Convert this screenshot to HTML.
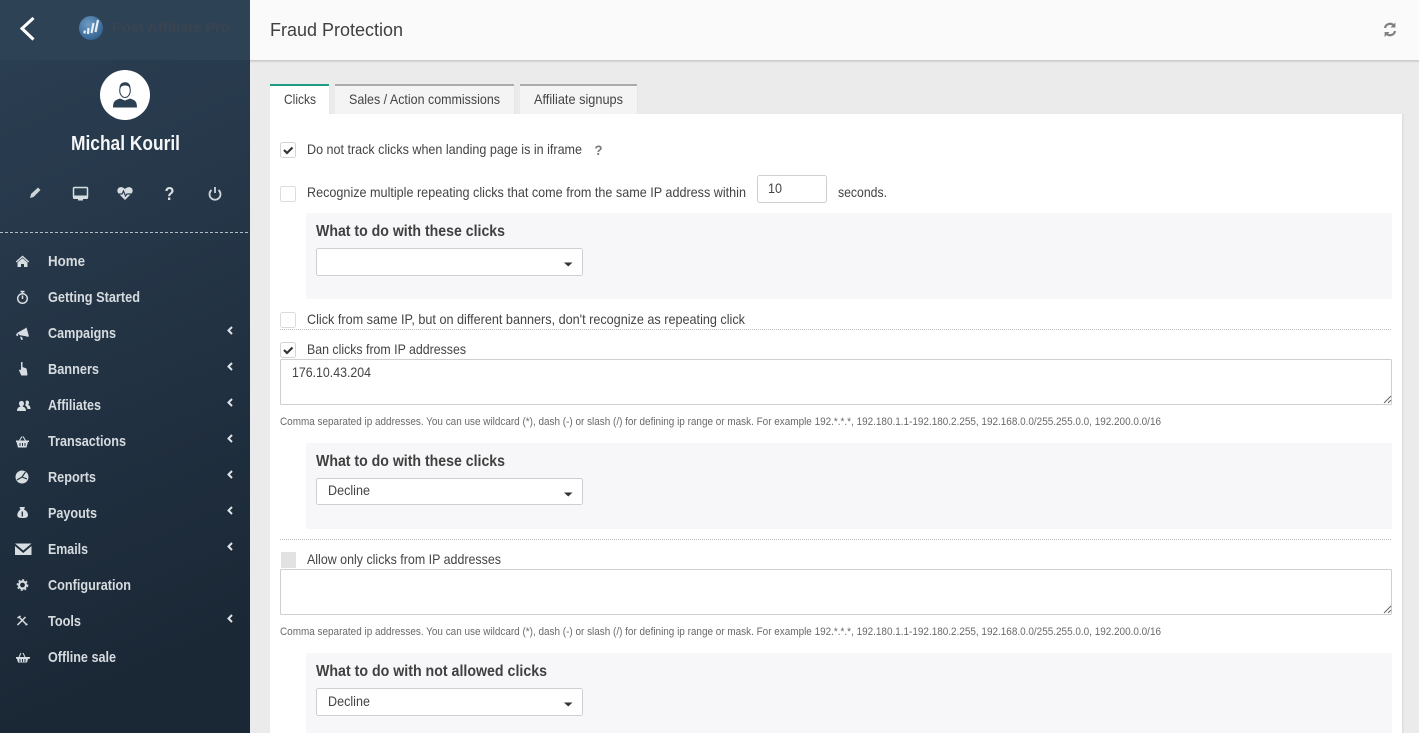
<!DOCTYPE html>
<html><head><meta charset="utf-8"><title>Fraud Protection</title>
<style>
html,body{margin:0;padding:0;width:1419px;height:733px;overflow:hidden;background:#ebebeb}
svg{display:block;position:absolute;left:0;top:0}
text{font-family:"Liberation Sans",sans-serif}
.m{font-size:15px;font-weight:bold;fill:#d6dbdf}
.t{font-size:14px;fill:#444}
.h{font-size:16px;font-weight:bold;fill:#404040}
.s{font-size:10.8px;fill:#6a6a6a}
.ic{fill:#d8dde1}
.box{fill:#fff;stroke:#cfcfcf;stroke-width:1}
</style></head><body>
<svg width="1419" height="733" viewBox="0 0 1419 733" xmlns="http://www.w3.org/2000/svg">
<defs>
<linearGradient id="sb" x1="0" y1="0" x2="0.15" y2="1"><stop offset="0" stop-color="#2c4054"/><stop offset="1" stop-color="#1a2735"/></linearGradient>
<linearGradient id="hs" x1="0" y1="0" x2="0" y2="1"><stop offset="0" stop-color="#c4c4c4"/><stop offset="1" stop-color="#ebebeb"/></linearGradient>
<radialGradient id="lg" cx="0.4" cy="0.35" r="0.75"><stop offset="0" stop-color="#6d9cc4"/><stop offset="1" stop-color="#2d5b8c"/></radialGradient>
</defs>

<!-- main -->
<rect x="250" y="0" width="1169" height="733" fill="#ebebeb"/>
<rect x="250" y="0" width="1169" height="60" fill="#fafafa"/>
<rect x="250" y="60" width="1169" height="3" fill="url(#hs)"/>
<text x="270" y="36" font-size="18.500" fill="#404040" textLength="133" lengthAdjust="spacingAndGlyphs">Fraud Protection</text>
<g fill="none" stroke="#808080" stroke-width="2.200">
<path d="M1385 28a5 5 0 0 1 8.600-2.600"/><path d="M1395 31a5 5 0 0 1-8.600 2.600"/>
</g>
<path d="M1395.400 22.500v5h-5zM1384.600 37v-5h5z" fill="#808080"/>

<!-- tabs -->
<rect x="335" y="84" width="179" height="30" fill="#f4f4f4"/><rect x="335" y="84" width="179" height="2" fill="#ababab"/>
<rect x="520" y="84" width="117" height="30" fill="#f4f4f4"/><rect x="520" y="84" width="117" height="2" fill="#ababab"/>
<rect x="270" y="84" width="59" height="30" fill="#fff"/><rect x="270" y="84" width="59" height="2" fill="#1f9c84"/>
<rect x="329" y="86" width="1" height="28" fill="#e6e6e6"/>
<rect x="514" y="86" width="1" height="28" fill="#e6e6e6"/>
<rect x="637" y="86" width="1" height="28" fill="#e6e6e6"/>
<text class="t" x="284" y="104" textLength="32" lengthAdjust="spacingAndGlyphs">Clicks</text>
<text class="t" x="349" y="104" textLength="151" lengthAdjust="spacingAndGlyphs">Sales / Action commissions</text>
<text class="t" x="534" y="104" textLength="89" lengthAdjust="spacingAndGlyphs">Affiliate signups</text>

<!-- panel -->
<rect x="270" y="114" width="1132" height="619" fill="#fff"/>
<rect x="1402" y="114" width="1.500" height="619" fill="#dedede"/>

<!-- row 1 -->
<rect x="280.500" y="142.500" width="15" height="15" rx="2" fill="#fff" stroke="#d4d4d4"/>
<path d="M284 150l3 3 5.500-5.500" fill="none" stroke="#333" stroke-width="2.200"/>
<text class="t" x="307" y="154" textLength="275" lengthAdjust="spacingAndGlyphs">Do not track clicks when landing page is in iframe</text>
<text x="594.500" y="155" font-size="14" font-weight="bold" fill="#777" textLength="8" lengthAdjust="spacingAndGlyphs">?</text>

<!-- row 2 -->
<rect x="280.500" y="186.500" width="15" height="15" rx="2" fill="#fff" stroke="#dcdcdc"/>
<text class="t" x="307" y="197" textLength="439" lengthAdjust="spacingAndGlyphs">Recognize multiple repeating clicks that come from the same IP address within</text>
<rect class="box" x="757.500" y="175.500" width="69" height="27" rx="2"/>
<text class="t" x="768" y="193" textLength="14" lengthAdjust="spacingAndGlyphs">10</text>
<text class="t" x="838" y="197" textLength="49" lengthAdjust="spacingAndGlyphs">seconds.</text>

<rect x="306" y="213" width="1086" height="86" fill="#f7f7f9"/>
<text class="h" x="316" y="236" textLength="189" lengthAdjust="spacingAndGlyphs">What to do with these clicks</text>
<rect class="box" x="316.500" y="248.500" width="266" height="27" rx="2"/>
<path d="M564 262.500h8.500l-4.250 4z" fill="#333"/>

<!-- row 3 -->
<rect x="280.500" y="312.500" width="15" height="15" rx="2" fill="#fff" stroke="#dcdcdc"/>
<text class="t" x="307" y="324" textLength="438" lengthAdjust="spacingAndGlyphs">Click from same IP, but on different banners, don't recognize as repeating click</text>
<path d="M280 329.500H1392" stroke="#bdbdbd" stroke-dasharray="1 1"/>

<!-- row 4 -->
<rect x="280.500" y="342.500" width="15" height="15" rx="2" fill="#fff" stroke="#d4d4d4"/>
<path d="M284 350l3 3 5.500-5.500" fill="none" stroke="#333" stroke-width="2.200"/>
<text class="t" x="307" y="354" textLength="159" lengthAdjust="spacingAndGlyphs">Ban clicks from IP addresses</text>
<rect class="box" x="280.500" y="359.500" width="1111" height="45" rx="1"/>
<text class="t" x="292" y="377" textLength="79" lengthAdjust="spacingAndGlyphs">176.10.43.204</text>
<path d="M1384 403l7-7M1388 403l3-3" stroke="#666" stroke-width="1" fill="none"/>
<text class="s" x="280" y="425" textLength="881" lengthAdjust="spacingAndGlyphs">Comma separated ip addresses. You can use wildcard (*), dash (-) or slash (/) for defining ip range or mask. For example 192.*.*.*, 192.180.1.1-192.180.2.255, 192.168.0.0/255.255.0.0, 192.200.0.0/16</text>

<rect x="306" y="443" width="1086" height="86" fill="#f7f7f9"/>
<text class="h" x="316" y="466" textLength="189" lengthAdjust="spacingAndGlyphs">What to do with these clicks</text>
<rect class="box" x="316.500" y="478.500" width="266" height="26" rx="2"/>
<text class="t" x="328" y="495" textLength="42" lengthAdjust="spacingAndGlyphs">Decline</text>
<path d="M564 492.500h8.500l-4.250 4z" fill="#333"/>
<path d="M280 539.500H1392" stroke="#bdbdbd" stroke-dasharray="1 1"/>

<!-- row 5 -->
<rect x="281" y="552" width="15" height="16" rx="1" fill="#e2e2e2"/>
<text class="t" x="307" y="564" textLength="194" lengthAdjust="spacingAndGlyphs">Allow only clicks from IP addresses</text>
<rect class="box" x="280.500" y="569.500" width="1111" height="45" rx="1"/>
<path d="M1384 613l7-7M1388 613l3-3" stroke="#666" stroke-width="1" fill="none"/>
<text class="s" x="280" y="635" textLength="881" lengthAdjust="spacingAndGlyphs">Comma separated ip addresses. You can use wildcard (*), dash (-) or slash (/) for defining ip range or mask. For example 192.*.*.*, 192.180.1.1-192.180.2.255, 192.168.0.0/255.255.0.0, 192.200.0.0/16</text>

<rect x="306" y="653" width="1086" height="80" fill="#f7f7f9"/>
<text class="h" x="316" y="676" textLength="231" lengthAdjust="spacingAndGlyphs">What to do with not allowed clicks</text>
<rect class="box" x="316.500" y="688.500" width="266" height="27" rx="2"/>
<text class="t" x="328" y="706" textLength="42" lengthAdjust="spacingAndGlyphs">Decline</text>
<path d="M564 702.500h8.500l-4.250 4z" fill="#333"/>

<!-- sidebar -->
<rect x="0" y="0" width="250" height="733" fill="url(#sb)"/>
<rect x="0" y="0" width="250" height="60" fill="#2e4256"/>
<path d="M33.500 18L22 28.500 33.500 39.500" fill="none" stroke="#fff" stroke-width="3"/>
<circle cx="91" cy="28" r="12" fill="url(#lg)"/>
<path d="M84.500 33.500l.3-3M88 34l.5-6M91.500 33l2-10M95.500 32l2.500-12" stroke="#e8f0f6" stroke-width="2.200" fill="none"/>
<text x="112" y="32" font-size="14" font-weight="bold" fill="#3a4450" textLength="118" lengthAdjust="spacingAndGlyphs">Post Affiliate Pro</text>

<circle cx="125" cy="95" r="25" fill="#fff"/>
<path d="M113 107.500c0-6 2-7.500 7-9l5 2 5-2c5 1.500 7 3 7 9z" fill="#2c4054"/>
<ellipse cx="125" cy="90.500" rx="5.300" ry="7" fill="#fff" stroke="#2c4054" stroke-width="1"/>
<path d="M119.500 88c0-4 2.500-5.800 5.500-5.800s5.500 1.800 5.500 5.800c-1.500-2-4-2.500-5.500-2.500-1.700 0-4 .7-5.500 2.500z" fill="#2c4054"/>
<text x="71" y="150" font-size="20" font-weight="bold" fill="#f4f6f7" textLength="109" lengthAdjust="spacingAndGlyphs">Michal Kouril</text>

<!-- quick icons -->
<path d="M30 198l1-4 7-6.500 2.500 2.500-7 7z" fill="#cfd4d8"/>
<rect x="73.500" y="187.500" width="14" height="10" rx="1" fill="#2b3e50" stroke="#d8dde1" stroke-width="1.500"/>
<path d="M73 195.500h15V198a1 1 0 0 1-1 1H74a1 1 0 0 1-1-1zM78 199h5v1.500h-5z" fill="#d8dde1"/>
<path d="M125 200l-6.500-6.500c-1.500-2-1.500-4 0-5.500 2-1.500 4.500-1 6.500 1 2-2 4.500-2.500 6.500-1 1.500 1.500 1.500 3.500 0 5.500z" fill="#d8dde1"/>
<path d="M118 194h4l1.500-3 2 5 1.500-2h5" fill="none" stroke="#2b3e50" stroke-width="1.200"/>
<text x="164.500" y="200" font-size="18" font-weight="bold" fill="#d8dde1" textLength="10" lengthAdjust="spacingAndGlyphs">?</text>
<path d="M211.500 190a5.500 5.500 0 1 0 7 0" fill="none" stroke="#cfd4d8" stroke-width="1.800"/>
<path d="M215 187v6" stroke="#cfd4d8" stroke-width="1.800"/>

<path d="M0 232.500H250" stroke="#b4bdc5" stroke-dasharray="3 2"/>

<!-- menu text -->
<text class="m" x="48" y="266" textLength="37" lengthAdjust="spacingAndGlyphs">Home</text>
<text class="m" x="48" y="302" textLength="92" lengthAdjust="spacingAndGlyphs">Getting Started</text>
<text class="m" x="48" y="338" textLength="68" lengthAdjust="spacingAndGlyphs">Campaigns</text>
<text class="m" x="48" y="374" textLength="51" lengthAdjust="spacingAndGlyphs">Banners</text>
<text class="m" x="48" y="410" textLength="53" lengthAdjust="spacingAndGlyphs">Affiliates</text>
<text class="m" x="48" y="446" textLength="78" lengthAdjust="spacingAndGlyphs">Transactions</text>
<text class="m" x="48" y="482" textLength="48" lengthAdjust="spacingAndGlyphs">Reports</text>
<text class="m" x="48" y="518" textLength="49" lengthAdjust="spacingAndGlyphs">Payouts</text>
<text class="m" x="48" y="554" textLength="40" lengthAdjust="spacingAndGlyphs">Emails</text>
<text class="m" x="48" y="590" textLength="83" lengthAdjust="spacingAndGlyphs">Configuration</text>
<text class="m" x="48" y="626" textLength="33" lengthAdjust="spacingAndGlyphs">Tools</text>
<text class="m" x="48" y="662" textLength="68" lengthAdjust="spacingAndGlyphs">Offline sale</text>

<!-- chevrons -->
<g fill="none" stroke="#dfe4e8" stroke-width="2">
<path d="M232 327l-3.500 3.500 3.500 3.500"/>
<path d="M232 363l-3.500 3.500 3.500 3.500"/>
<path d="M232 399l-3.500 3.500 3.500 3.500"/>
<path d="M232 435l-3.500 3.500 3.500 3.500"/>
<path d="M232 471l-3.500 3.500 3.500 3.500"/>
<path d="M232 507l-3.500 3.500 3.500 3.500"/>
<path d="M232 543l-3.500 3.500 3.500 3.500"/>
<path d="M232 615l-3.500 3.500 3.500 3.500"/>
</g>

<!-- menu icons -->
<path class="ic" d="M22.500 255.500l6.700 6-.9 1-5.800-5.100-5.800 5.100-.9-1zM17.500 262.500l5-4.200 5 4.200v4.500h-3.500v-3h-3v3h-3.500z"/>
<g fill="none" stroke="#d8dde1" stroke-width="1.500"><circle cx="22.500" cy="298.500" r="4.800"/><path d="M22.500 295.500v3.500M20.500 291.500h4M22.500 291.500v2"/></g>
<path class="ic" d="M17 333l8-4.500 1.500-1 2.500 9-2 .2-1-.5-6-1zM16 334l1.500-.8.800 2.500-1.500.5zM20 336.500l2 .5 1 2.500-1.800.5z"/>
<path class="ic" d="M21 362h1.500v5l4 1.500.8 4.500v2.500h-6l-2.500-5.500 1.500-.5.700 1v-8.500z"/>
<path class="ic" d="M17 411c0-3 1.500-4 3.500-4.500-1-1-1.500-2-1.500-3 0-1.500 1-2.500 2.500-2.500s2.500 1 2.500 2.500c0 1-.5 2-1.500 3 2 .5 3.500 1.500 3.500 4.500z"/>
<path class="ic" d="M27 400.500c1.300 0 2 1 2 2.200 0 .8-.3 1.600-1 2.300 1.500.4 2.500 1.300 2.500 4h-3c-.3-2-1.300-3-2.500-3.800.5-.8.800-1.500.8-2.200 0-.6-.1-1-.3-1.400.3-.7 1-1.100 1.500-1.100z"/>
<path class="ic" d="M16 440.500h13v1.500h-1l-1.500 5.500h-8.500l-1.500-5.500h-.5z"/>
<path d="M19.500 440.500l2.500-4M25.500 440.500l-2.500-4" stroke="#d8dde1" stroke-width="1.100" fill="none"/>
<path d="M20 443v3M22.500 443v3M25 443v3" stroke="#1f3040" stroke-width="1"/>
<circle class="ic" cx="22" cy="477" r="6.500"/>
<path d="M22 477l3.500-5M22 477l-5 3M22 477l5 2" stroke="#1f3040" stroke-width="1.100" fill="none"/>
<path class="ic" d="M19.500 507h5.500l-1 2.500c2.500 1 4 3.500 4 5.500 0 2.500-2 3-5.200 3s-5.500-.5-5.500-3c0-2 1.600-4.500 3.200-5.500z"/>
<path d="M22.300 511.500v5" stroke="#1f3040" stroke-width="1.300"/>
<path class="ic" d="M15 543.500h16.500l-8.250 7zM15 546l8.250 7 8.250-7v9H15z"/>
<circle cx="22.500" cy="585" r="3.500" fill="none" stroke="#d8dde1" stroke-width="2.200"/>
<circle cx="22.500" cy="585" r="5.200" fill="none" stroke="#d8dde1" stroke-width="1.300" stroke-dasharray="2 2"/>
<path d="M17.500 625l8-8M19 617l8 8M17.500 618l3-2M25.500 625l2-1" stroke="#d8dde1" stroke-width="1.500" fill="none"/>
<path class="ic" d="M16 657h14v1.500l-2 .5-1 3.500h-9l-1-3.500-1-.5z"/>
<path d="M19 657l2-4M25 657l-2-4" stroke="#d8dde1" stroke-width="1" fill="none"/>
<path d="M20 659v3M22.500 659v3M25 659v3" stroke="#1f3040" stroke-width="1"/>
</svg>
</body></html>
